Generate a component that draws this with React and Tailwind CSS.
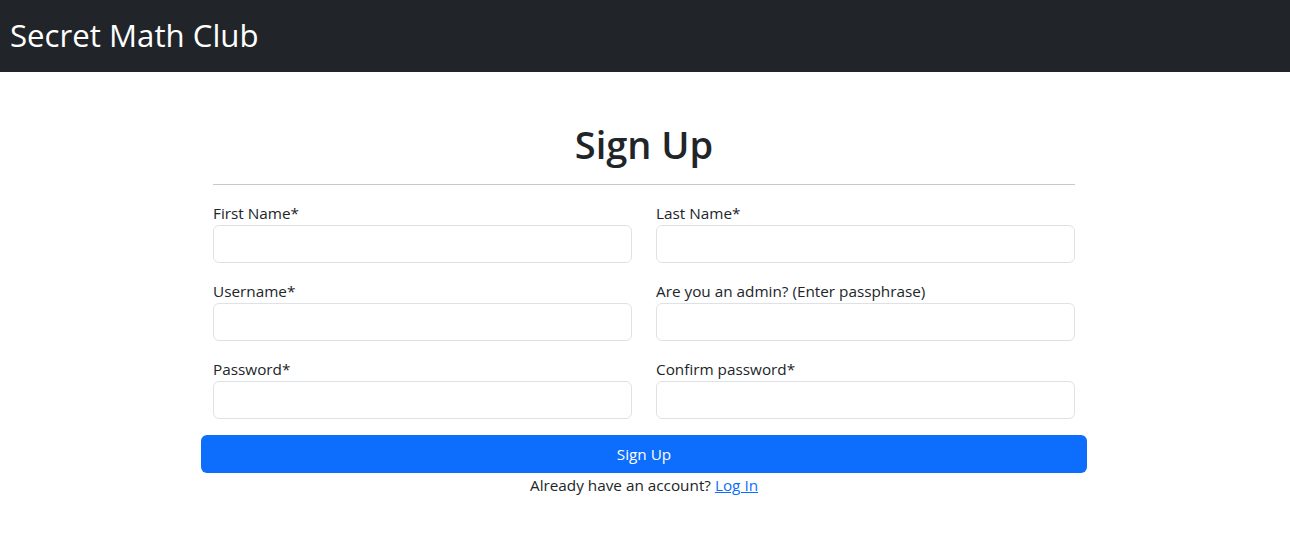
function Field({ label }) {
  return (
    <div className="flex flex-col">
      <label className="h-6 leading-6 text-[15.3px] text-[#212529]">{label}</label>
      <input className="h-[38px] rounded-[6px] border border-[#dee2e6] bg-white px-3 outline-none" />
    </div>
  );
}

export default function App() {
  return (
    <div className="min-h-[552px] bg-white text-[#212529]" style={{ fontFamily: '"Open Sans", sans-serif' }}>
      <nav className="h-[72px] bg-[#212529] flex items-center px-[10px]">
        <span className="text-white text-[31.2px] leading-none -mt-[1px]">Secret Math Club</span>
      </nav>
      <div className="flex justify-center pr-[2px]">
        <div className="w-[886px] pt-[48px]">
          <div className="px-3">
            <h1 className="text-center text-[38px] font-semibold leading-[48px] mb-2">Sign Up</h1>
            <hr className="mt-4 mb-4 border-0 border-t border-[#c8c9ca]" />
            <div className="grid grid-cols-2 gap-x-6 gap-y-4">
              <Field label="First Name*" />
              <Field label="Last Name*" />
              <Field label="Username*" />
              <Field label="Are you an admin? (Enter passphrase)" />
              <Field label="Password*" />
              <Field label="Confirm password*" />
            </div>
          </div>
          <button className="mt-4 w-full h-[38px] rounded-[6px] bg-[#0d6efd] text-white text-[15.3px]">Sign Up</button>
          <p className="text-center h-6 leading-6 text-[15.3px]">
            Already have an account? <a href="#" className="text-[#0d6efd] underline">Log In</a>
          </p>
        </div>
      </div>
    </div>
  );
}
